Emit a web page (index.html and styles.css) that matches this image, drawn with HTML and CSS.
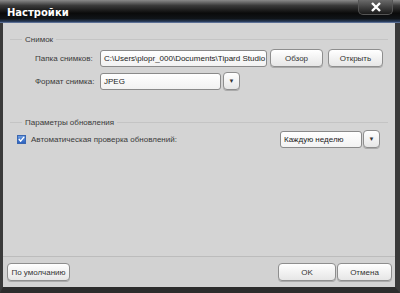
FILE: index.html
```html
<!DOCTYPE html>
<html>
<head>
    <link rel="stylesheet" href="styles.css">
</head>
<body>
    <div class="window">
        <div class="titlebar">
            <span class="title">Настройки</span>
            <button class="close-btn">
                <svg width="12" height="10" viewBox="0 0 12 10">
                    <path d="M2 1 L10 9 M10 1 L2 9" stroke="#fff" stroke-width="2.4"/>
                </svg>
            </button>
        </div>

        <div class="content">
            <div class="group">
                <div class="group-title"><span>Снимок</span></div>
                <div class="row">
                    <span class="label">Папка снимков:</span>
                    <div class="field path-field">C:\Users\plopr_000\Documents\Tipard Studio</div>
                    <button class="btn browse-btn">Обзор</button>
                    <button class="btn open-btn">Открыть</button>
                </div>
                <div class="row">
                    <span class="label">Формат снимка:</span>
                    <div class="field format-field">JPEG</div>
                    <button class="btn arrow-btn">&#9660;</button>
                </div>
            </div>

            <div class="group updates">
                <div class="group-title"><span>Параметры обновления</span></div>
                <div class="row check-row">
                    <span class="checkbox">
                        <svg width="8" height="8" viewBox="0 0 8 8">
                            <path d="M1 4 L3 6.5 L7 1.5" stroke="#fff" stroke-width="1.6" fill="none"/>
                        </svg>
                    </span>
                    <span class="check-label">Автоматическая проверка обновлений:</span>
                    <div class="spacer"></div>
                    <div class="field period-field">Каждую неделю</div>
                    <button class="btn arrow-btn">&#9660;</button>
                </div>
            </div>
        </div>

        <div class="footer">
            <button class="btn default-btn">По умолчанию</button>
            <div class="spacer"></div>
            <button class="btn ok-btn">OK</button>
            <button class="btn cancel-btn">Отмена</button>
        </div>
    </div>
</body>
</html>
```

FILE: styles.css
```css
body {
    margin: 0;
    font-family: "Liberation Sans", Arial, sans-serif;
    font-size: 8px;
    color: #3a3a3a;
    background-color: #2e2e2e;
}

.window {
    width: 400px;
    height: 293px;
    display: flex;
    flex-direction: column;
    box-sizing: border-box;
    border-left: 3px solid #3a3a3a;
    border-right: 5px solid #3a3a3a;
    border-bottom: 6px solid #2c2c2c;
    background-color: #d4d4d4;
}

.titlebar {
    height: 22px;
    margin: 0 -5px 0 -3px;
    display: flex;
    align-items: center;
    padding: 0 7px;
    background: linear-gradient(#8a8a8a 0%, #3a3a3a 25%, #0a0a0a 60%, #101418 85%, #2f4468 100%);
    border-bottom: 1px solid #5a6e94;
    position: relative;
}

.title {
    color: #fff;
    font-family: "DejaVu Sans", sans-serif;
    font-weight: bold;
    font-size: 10px;
    margin-top: 3px;
}

.close-btn {
    position: absolute;
    top: 0;
    right: 7px;
    width: 35px;
    height: 15px;
    padding: 0;
    display: flex;
    align-items: center;
    justify-content: center;
    border: 1px solid #555;
    border-top: none;
    border-radius: 0 0 5px 5px;
    background: linear-gradient(#6a6a6a, #1a1a1a);
}

.content {
    flex: 1;
    padding: 12px 7px 0 7px;
}

.group-title {
    display: flex;
    align-items: center;
    gap: 3px;
}

.group-title::before {
    content: "";
    width: 12px;
    border-top: 1px solid #c4c4c4;
}

.group-title::after {
    content: "";
    flex: 1;
    border-top: 1px solid #c4c4c4;
}

.row {
    display: flex;
    align-items: center;
    gap: 3px;
    padding-left: 25px;
    margin-top: 5px;
}

.label {
    width: 62px;
}

.field {
    height: 17px;
    box-sizing: border-box;
    padding: 0 3px;
    display: flex;
    align-items: center;
    white-space: nowrap;
    overflow: hidden;
    border: 1px solid #8a8a8a;
    border-radius: 3px;
    background: linear-gradient(#ffffff, #f2f2f2);
    color: #222;
}

.path-field {
    width: 167px;
}

.format-field {
    width: 121px;
}

.btn {
    height: 18px;
    padding: 0;
    box-sizing: border-box;
    border: 1px solid #8e8e8e;
    border-radius: 4px;
    background: linear-gradient(#ffffff, #e6e6e6);
    font-family: "Liberation Sans", Arial, sans-serif;
    font-size: 8px;
    color: #333;
    box-shadow: 0 1px 0 #aaa;
}

.browse-btn {
    width: 53px;
}

.open-btn {
    width: 55px;
    margin-left: 2px;
}

.arrow-btn {
    width: 17px;
    margin-left: -1px;
    font-size: 6px;
    color: #333;
}

.updates {
    margin-top: 28px;
}

.check-row {
    padding-left: 7px;
    margin-top: 3px;
}

.checkbox {
    width: 9px;
    height: 9px;
    display: flex;
    align-items: center;
    justify-content: center;
    box-sizing: border-box;
    border: 1px solid #3a66b0;
    background: linear-gradient(#6a9ae0, #2c62c0);
}

.check-label {
    margin-left: 2px;
}

.spacer {
    flex: 1;
}

.period-field {
    width: 82px;
}

.check-row .arrow-btn {
    margin-right: 8px;
    margin-left: -2px;
}

.footer {
    height: 30px;
    display: flex;
    align-items: center;
    gap: 1px;
    padding: 0 3px 0 4px;
    border-top: 1px solid #bcbcbc;
    background-color: #d2d2d2;
}

.default-btn {
    width: 63px;
}

.ok-btn {
    width: 58px;
}

.cancel-btn {
    width: 55px;
}
```
